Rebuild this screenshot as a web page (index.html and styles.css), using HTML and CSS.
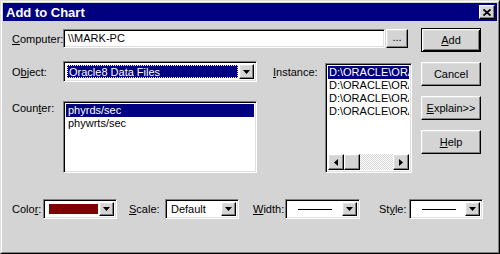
FILE: index.html
```html
<!DOCTYPE html>
<html lang="en">
<head>
    <meta charset="UTF-8">
    <title>Add to Chart</title>
    <link rel="stylesheet" href="styles.css">
</head>
<body>
<div class="window">
  <div class="frame">
    <!-- title bar -->
    <div class="titlebar">
      <span class="title">Add to Chart</span>
      <div class="close raised">
        <svg width="8" height="7" viewBox="0 0 8 7"><path d="M0.5 0.5L7.5 6.5M7.5 0.5L0.5 6.5" stroke="#000" stroke-width="1.8"/></svg>
      </div>
    </div>

    <div class="content">
      <div class="form">
        <div class="computer-row">
          <label class="lbl lbl-computer"><u>C</u>omputer:</label>
          <div class="textbox sunken">\\MARK-PC</div>
          <div class="btn-browse raised">...</div>
        </div>

        <div class="grid">
          <label class="lbl lbl-object">O<u>b</u>ject:</label>
          <div class="combo combo-object sunken">
            <div class="combo-value"><span class="sel">Oracle8 Data Files</span></div>
            <div class="combo-arrow raised"><svg width="7" height="4"><polygon points="0,0 7,0 3.5,4" fill="#000"/></svg></div>
          </div>

          <label class="lbl lbl-instance"><u>I</u>nstance:</label>
          <div class="listbox list-instance sunken">
            <ul class="items">
              <li class="selected">D:\ORACLE\ORADATA</li>
              <li>D:\ORACLE\ORADATA</li>
              <li>D:\ORACLE\ORADATA</li>
              <li>D:\ORACLE\ORADATA</li>
            </ul>
            <div class="hscroll">
              <div class="sb-btn raised"><svg width="4" height="7"><polygon points="4,0 4,7 0,3.5" fill="#000"/></svg></div>
              <div class="sb-thumb raised"></div>
              <div class="sb-track"></div>
              <div class="sb-btn raised"><svg width="4" height="7"><polygon points="0,0 0,7 4,3.5" fill="#000"/></svg></div>
            </div>
          </div>

          <label class="lbl lbl-counter">Coun<u>t</u>er:</label>
          <div class="listbox list-counter sunken">
            <ul class="items">
              <li class="selected">phyrds/sec</li>
              <li>phywrts/sec</li>
            </ul>
          </div>
        </div>
      </div>

      <div class="side">
        <div class="btn btn-default"><u>A</u>dd</div>
        <div class="btn raised">Cancel</div>
        <div class="btn raised"><u>E</u>xplain&gt;&gt;</div>
        <div class="btn raised"><u>H</u>elp</div>
      </div>
    </div>

    <!-- color / scale / width / style -->
    <div class="bottom">
      <label class="lbl lbl-color">Colo<u>r</u>:</label>
      <div class="combo combo-small sunken">
        <div class="combo-value"><span class="swatch"></span></div>
        <div class="combo-arrow raised"><svg width="7" height="4"><polygon points="0,0 7,0 3.5,4" fill="#000"/></svg></div>
      </div>
      <label class="lbl lbl-scale"><u>S</u>cale:</label>
      <div class="combo combo-small sunken">
        <div class="combo-value combo-text">Default</div>
        <div class="combo-arrow raised"><svg width="7" height="4"><polygon points="0,0 7,0 3.5,4" fill="#000"/></svg></div>
      </div>
      <label class="lbl lbl-width"><u>W</u>idth:</label>
      <div class="combo combo-small combo-wide sunken">
        <div class="combo-value combo-line"><span class="line"></span></div>
        <div class="combo-arrow raised"><svg width="7" height="4"><polygon points="0,0 7,0 3.5,4" fill="#000"/></svg></div>
      </div>
      <label class="lbl lbl-style">St<u>y</u>le:</label>
      <div class="combo combo-small sunken">
        <div class="combo-value combo-line"><span class="line"></span></div>
        <div class="combo-arrow raised"><svg width="7" height="4"><polygon points="0,0 7,0 3.5,4" fill="#000"/></svg></div>
      </div>
    </div>
  </div>
</div>
</body>
</html>
```

FILE: styles.css
```css
*{
    margin: 0;
    padding: 0;
    box-sizing: border-box;
    list-style: none;
}
body{
    width: 500px;
    height: 254px;
    overflow: hidden;
    background: #d4d4d4;
    font: 11px "Liberation Sans", Arial, sans-serif;
    color: #000;
}
svg{
    display: block;
}

/* bevels */
.raised{
    background: #d4d4d4;
    border: 1px solid;
    border-color: #fff #000 #000 #fff;
    box-shadow: inset -1px -1px #808080, inset 1px 1px #dfdfdf;
}
.sunken{
    background: #fff;
    border: 1px solid;
    border-color: #808080 #fff #fff #808080;
    box-shadow: inset 1px 1px #000, inset -1px -1px #dfdfdf;
}

.window{
    width: 500px;
    height: 254px;
    border: 1px solid;
    border-color: #dfdfdf #000 #000 #dfdfdf;
}
.frame{
    height: 100%;
    border: 1px solid;
    border-color: #fff #808080 #808080 #fff;
    padding: 1px;
}
.titlebar{
    height: 18px;
    background: #000080;
    color: #fff;
    display: flex;
    align-items: center;
    justify-content: space-between;
    padding: 0 2px 0 3px;
}
.title{
    font-weight: bold;
    font-size: 13px;
}
.close{
    width: 16px;
    height: 14px;
    display: flex;
    align-items: center;
    justify-content: center;
}

.content{
    display: flex;
    gap: 9px;
    margin-top: 7px;
    padding-left: 9px;
}
.form{
    width: 400px;
}
.lbl{
    display: block;
}
.computer-row{
    display: flex;
    align-items: center;
    height: 19px;
    margin-top: 1px;
}
.lbl-computer{
    width: 51px;
}
.textbox{
    width: 322px;
    height: 19px;
    padding: 2px 0 0 4px;
}
.btn-browse{
    width: 22px;
    height: 19px;
    margin-left: 1px;
    text-align: center;
    line-height: 14px;
}

.grid{
    display: grid;
    grid-template-columns: 51px 194px 16px 52px 87px;
    grid-template-rows: 21px 19px 72px;
    margin-top: 13px;
}
.lbl-object{
    grid-column: 1;
    grid-row: 1;
    align-self: center;
}
.combo-object{
    grid-column: 2;
    grid-row: 1;
}
.lbl-instance{
    grid-column: 4;
    grid-row: 1;
    align-self: center;
}
.list-instance{
    grid-column: 5;
    grid-row: 1 / 4;
    margin-top: 2px;
}
.lbl-counter{
    grid-column: 1;
    grid-row: 3;
    padding-top: 1px;
}
.list-counter{
    grid-column: 2;
    grid-row: 3;
}

/* combo boxes */
.combo{
    display: flex;
    padding: 2px;
}
.combo-value{
    flex: 1;
    padding: 1px;
    display: flex;
    align-items: center;
    overflow: hidden;
}
.combo-arrow{
    width: 15px;
    display: flex;
    align-items: center;
    justify-content: center;
}
.sel{
    display: block;
    width: 100%;
    height: 100%;
    background: #000080;
    color: #fff;
    outline: 1px dotted #ffff80;
    outline-offset: -1px;
    padding: 1px 0 0 2px;
}

/* list boxes */
.listbox{
    padding: 2px;
    display: flex;
    flex-direction: column;
    overflow: hidden;
}
.items{
    flex: 1;
}
.items li{
    height: 13px;
    line-height: 13px;
    padding-left: 2px;
    white-space: nowrap;
    overflow: hidden;
}
.items .selected{
    background: #000080;
    color: #fff;
}
.list-instance .items li{
    padding-left: 1px;
}
.hscroll{
    display: flex;
    height: 16px;
}
.sb-btn{
    width: 16px;
    display: flex;
    align-items: center;
    justify-content: center;
}
.sb-thumb{
    width: 16px;
}
.sb-track{
    flex: 1;
    background: repeating-conic-gradient(#fff 0 25%, #d4d4d4 0 50%) 0 0/2px 2px;
}

/* side buttons */
.side{
    display: flex;
    flex-direction: column;
    gap: 10px;
    width: 60px;
}
.btn{
    height: 24px;
    display: flex;
    align-items: center;
    justify-content: center;
}
.btn-default{
    background: #d4d4d4;
    border: 1px solid #000;
    box-shadow: inset 1px 1px #fff, inset -1px -1px #000, inset 2px 2px #dfdfdf, inset -2px -2px #808080;
}

/* bottom row */
.bottom{
    display: flex;
    align-items: center;
    margin-top: 26px;
    padding-left: 9px;
}
.lbl-color{
    width: 31px;
}
.lbl-scale{
    width: 36px;
    margin-left: 12px;
}
.lbl-width{
    width: 32px;
    margin-left: 14px;
}
.lbl-style{
    width: 30px;
    margin-left: 19px;
}
.combo-small{
    width: 74px;
    height: 20px;
}
.combo-wide{
    width: 75px;
}
.swatch{
    display: block;
    width: 50px;
    height: 10px;
    margin-left: 2px;
    background: #800000;
}
.combo-text{
    padding-left: 3px;
}
.combo-line{
    justify-content: center;
}
.line{
    display: block;
    width: 34px;
    height: 1px;
    background: #000;
}
```
